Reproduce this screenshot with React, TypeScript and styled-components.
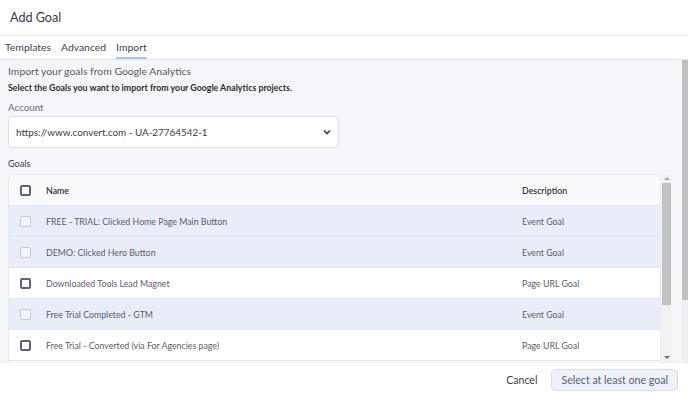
import styled, { createGlobalStyle } from "styled-components";

const GlobalStyle = createGlobalStyle`
  html, body {
    margin: 0;
    padding: 0;
    background: #ffffff;
  }
  * {
    box-sizing: border-box;
  }
  body {
    font-family: Lato, "Noto Sans", sans-serif;
    color: #333;
  }
`;

const Modal = styled.div`
  width: 688px;
  height: 396px;
  display: flex;
  flex-direction: column;
  background: #fff;
  overflow: hidden;
`;

const Header = styled.div`
  height: 36px;
  flex: none;
  display: flex;
  align-items: center;
  padding-left: 10px;
  border-bottom: 1px solid #e6e7ea;
  font-size: 12.6px;
  color: #3a3a3a;
`;

const Tabs = styled.div`
  height: 24px;
  flex: none;
  display: flex;
  gap: 10px;
  padding-left: 5px;
  border-bottom: 1px solid #e3e5ea;
`;

const Tab = styled.div<{ $active?: boolean }>`
  font-size: 10.4px;
  line-height: 21px;
  padding-top: 1px;
  color: #3d4250;
  border-bottom: 2px solid ${(p) => (p.$active ? "#aac4ee" : "transparent")};
`;

const Body = styled.div`
  flex: 1;
  min-height: 0;
  display: flex;
  background: #f5f6fa;
  overflow: hidden;
`;

const Content = styled.div`
  flex: 1;
  min-width: 0;
  padding: 3px 11px 0 8px;
  display: flex;
  flex-direction: column;
`;

const OuterScroll = styled.div`
  width: 6px;
  flex: none;
  display: flex;
  flex-direction: column;
  background: #efefef;
`;

const Thumb = styled.div<{ $h: number }>`
  height: ${(p) => p.$h}px;
  background: #c1c1c1;
  flex: none;
`;

const Intro = styled.div`
  flex: none;
  font-size: 10.4px;
  line-height: 16px;
  color: #555a63;
`;

const Hint = styled.div`
  flex: none;
  font-size: 8.8px;
  line-height: 16px;
  font-weight: 700;
  color: #2a2d33;
  margin-top: 1px;
`;

const Label = styled.div<{ $dark?: boolean }>`
  flex: none;
  font-size: ${(p) => (p.$dark ? 9.1 : 9.8)}px;
  line-height: 16px;
  color: ${(p) => (p.$dark ? "#3a3d44" : "#6a6e76")};
  margin-top: ${(p) => (p.$dark ? 8 : 3)}px;
  margin-bottom: ${(p) => (p.$dark ? 2 : 1)}px;
`;

const Select = styled.div`
  flex: none;
  width: 331px;
  height: 32px;
  background: #fff;
  border: 1px solid #dfe1e7;
  border-radius: 4px;
  display: flex;
  align-items: center;
  justify-content: space-between;
  padding: 0 6px 0 7px;
  font-size: 9.9px;
  color: #383b42;
`;

const TableWrap = styled.div`
  flex: 1;
  min-height: 0;
  display: flex;
  gap: 1px;
`;

const Table = styled.div`
  flex: 1;
  background: #fff;
  border: 1px solid #e6e9f0;
  border-bottom: none;
  border-radius: 6px 6px 0 0;
  overflow: hidden;
`;

const Row = styled.div<{ $tone: "head" | "dim" | "plain" }>`
  display: grid;
  grid-template-columns: 26px 476px 1fr;
  align-items: center;
  height: 31px;
  padding-left: 11px;
  font-size: 8.8px;
  color: ${(p) => (p.$tone === "head" ? "#2f333b" : "#5a5e68")};
  font-weight: ${(p) => (p.$tone === "head" ? 600 : 400)};
  background: ${(p) =>
    p.$tone === "head" ? "#f9fafc" : p.$tone === "dim" ? "#e9edf8" : "#ffffff"};
  border-bottom: 1px solid #e1e5ee;
`;

const Check = styled.span<{ $off?: boolean }>`
  width: 11px;
  height: 11px;
  border-radius: 2px;
  border: ${(p) => (p.$off ? "1.5px solid #c6c9cf" : "2px solid #5d6472")};
  background: ${(p) => (p.$off ? "#f3f4f7" : "#fff")};
`;

const TableScroll = styled.div`
  width: 9px;
  flex: none;
  display: flex;
  flex-direction: column;
  align-items: center;
  background: #f1f1f1;
  padding-top: 3px;
`;

const Arrow = styled.div<{ $down?: boolean }>`
  width: 0;
  height: 0;
  border-left: 3px solid transparent;
  border-right: 3px solid transparent;
  ${(p) =>
    p.$down
      ? "border-top: 3px solid #6a6a6a; margin-top: auto; margin-bottom: 3px;"
      : "border-bottom: 3px solid #a3a3a3; margin-bottom: 3px;"}
`;

const InnerThumb = styled.div`
  width: 9px;
  height: 122px;
  background: #c1c1c1;
`;

const Footer = styled.div`
  height: 34px;
  flex: none;
  display: flex;
  align-items: center;
  justify-content: flex-end;
  gap: 14px;
  padding-right: 10px;
  border-top: 1px solid #eceef2;
  background: #fff;
`;

const Cancel = styled.div`
  font-size: 10.6px;
  color: #3a3d44;
`;

const Primary = styled.div`
  height: 22px;
  padding: 0 9px;
  display: flex;
  align-items: center;
  border: 1px solid #d6dce7;
  border-radius: 5px;
  background: #eef1f7;
  font-size: 10.6px;
  color: #56617a;
`;

const goals = [
  { name: "FREE - TRIAL: Clicked Home Page Main Button", type: "Event Goal", off: true },
  { name: "DEMO: Clicked Hero Button", type: "Event Goal", off: true },
  { name: "Downloaded Tools Lead Magnet", type: "Page URL Goal", off: false },
  { name: "Free Trial Completed - GTM", type: "Event Goal", off: true },
  { name: "Free Trial - Converted (via For Agencies page)", type: "Page URL Goal", off: false },
];

export default function App() {
  return (
    <>
      <GlobalStyle />
      <Modal>
        <Header>Add Goal</Header>
        <Tabs>
          <Tab>Templates</Tab>
          <Tab>Advanced</Tab>
          <Tab $active>Import</Tab>
        </Tabs>
        <Body>
          <Content>
            <Intro>Import your goals from Google Analytics</Intro>
            <Hint>Select the Goals you want to import from your Google Analytics projects.</Hint>
            <Label>Account</Label>
            <Select>
              <span>https://www.convert.com - UA-27764542-1</span>
              <svg width="10" height="10" viewBox="0 0 10 10">
                <path d="M2 3.5 L5 6.5 L8 3.5" fill="none" stroke="#3a3d44" strokeWidth="1.6" />
              </svg>
            </Select>
            <Label $dark>Goals</Label>
            <TableWrap>
              <Table>
                <Row $tone="head">
                  <Check />
                  <span>Name</span>
                  <span>Description</span>
                </Row>
                {goals.map((g) => (
                  <Row key={g.name} $tone={g.off ? "dim" : "plain"}>
                    <Check $off={g.off} />
                    <span>{g.name}</span>
                    <span>{g.type}</span>
                  </Row>
                ))}
              </Table>
              <TableScroll>
                <Arrow />
                <InnerThumb />
                <Arrow $down />
              </TableScroll>
            </TableWrap>
          </Content>
          <OuterScroll>
            <Thumb $h={240} />
          </OuterScroll>
        </Body>
        <Footer>
          <Cancel>Cancel</Cancel>
          <Primary>Select at least one goal</Primary>
        </Footer>
      </Modal>
    </>
  );
}
